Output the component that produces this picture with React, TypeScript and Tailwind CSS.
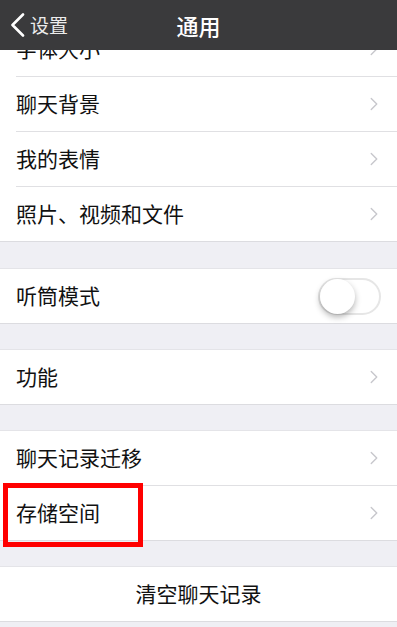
import { ChevronRight } from "lucide-react";

const font = { fontFamily: '"Noto Sans CJK SC", "Noto Sans", sans-serif' };

function Row({ label, last = false, children }: { label: string; last?: boolean; children?: React.ReactNode }) {
  return (
    <div className={`relative h-[55px] bg-white ${last ? "border-b border-[#dcdce0]" : "pl-4"}`}>
      <div className={`flex h-full items-center pr-4 ${last ? "pl-4" : "border-b border-[#e0e0e3]"}`}>
        <span className="flex-1 text-[21px] text-[#111]">{label}</span>
        {children ?? <ChevronRight size={22} strokeWidth={1.5} className="text-[#c7c7cc] -mr-1" />}
      </div>
    </div>
  );
}

export default function App() {
  return (
    <div className="flex h-[627px] w-[397px] flex-col overflow-hidden bg-[#efeff4]" style={font}>
      {/* Nav bar */}
      <div className="relative z-10 flex h-[50px] shrink-0 items-center bg-[#3a3a3c] text-white">
        <div className="flex items-center gap-[5px] pl-[10px]">
          <svg width="15" height="24" viewBox="0 0 15 24" fill="none" stroke="currentColor" strokeWidth="2.6" strokeLinecap="round" strokeLinejoin="round">
            <path d="M13 1.5L2.5 12L13 22.5" />
          </svg>
          <span className="text-[19px] text-[#ececec]">设置</span>
        </div>
        <span className="absolute left-1/2 -translate-x-1/2 text-[22px] font-medium">通用</span>
      </div>

      <div className="flex-1 overflow-hidden">
        <div className="-mt-[28px] flex flex-col">
          <div>
            <Row label="字体大小" />
            <Row label="聊天背景" />
            <Row label="我的表情" />
            <Row label="照片、视频和文件" last />
          </div>

          <div className="h-[27px] border-b border-[#e4e4e8]" />
          <Row label="听筒模式" last>
            <div className="flex h-[37px] w-[63px] items-center rounded-full border-2 border-[#e6e6e6] bg-white">
              <div className="h-[35px] w-[35px] rounded-full bg-white shadow-[0_3px_6px_rgba(0,0,0,0.3)]" />
            </div>
          </Row>

          <div className="h-[26px] border-b border-[#e4e4e8]" />
          <Row label="功能" last />

          <div className="h-[26px] border-b border-[#e4e4e8]" />
          <Row label="聊天记录迁移" />
          <div className="relative">
            <Row label="存储空间" last />
            <div className="absolute left-[3px] top-[-3px] h-[64px] w-[140px] border-[5px] border-[#ff0000]" />
          </div>

          <div className="h-[26px] border-b border-[#e4e4e8]" />
          <div className="flex h-[55px] items-center justify-center border-b border-[#dcdce0] bg-white text-[21px] text-[#111]">
            清空聊天记录
          </div>
        </div>
      </div>
    </div>
  );
}
